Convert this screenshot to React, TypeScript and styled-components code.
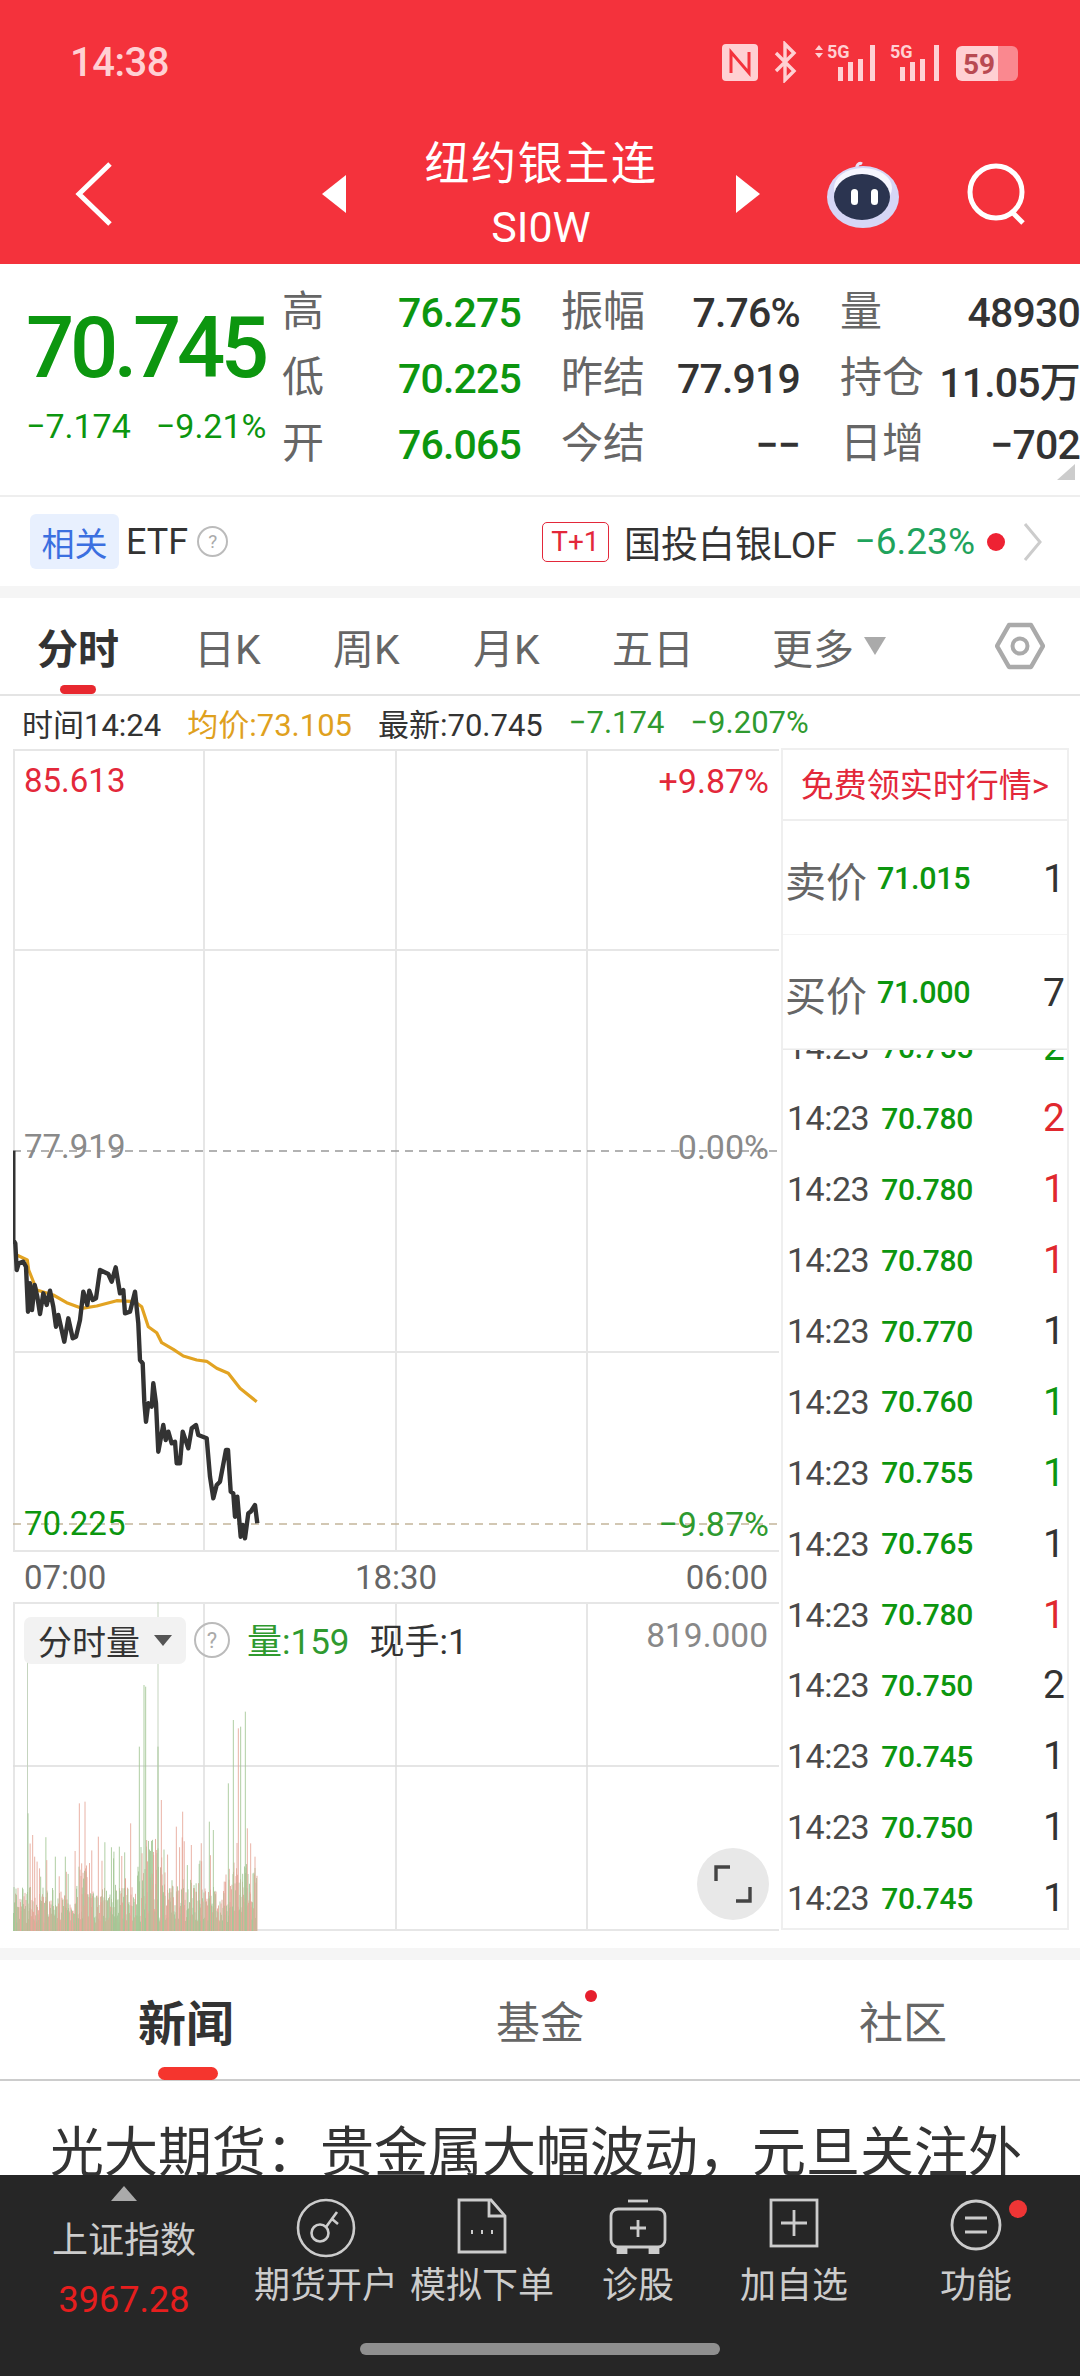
import React from "react";
import styled, { createGlobalStyle } from "styled-components";

const GREEN = "#0c960f";
const SOFT_GREEN = "#2f9a2f";
const RED = "#e3283a";
const GRID = "#e6e6e6";

const GlobalStyle = createGlobalStyle`
  html, body {
    margin: 0;
    padding: 0;
    background: #fff;
    font-family: Roboto, "Noto Sans CJK SC", sans-serif;
  }
  * { box-sizing: border-box; }
`;

const Page = styled.div`
  position: relative;
  width: 1080px;
  height: 2376px;
  overflow: hidden;
  background: #fff;
  display: flex;
  flex-direction: column;
`;

/* header */
const Header = styled.header`
  height: 264px;
  background: #f4323c;
  color: #fff;
`;

const StatusBar = styled.div`
  height: 124px;
  padding: 0 58px 0 70px;
  display: flex;
  align-items: center;
  justify-content: space-between;
`;

const Clock = styled.span`
  font-size: 40px;
  font-weight: 500;
  color: #ffd0d3;
  letter-spacing: -0.5px;
`;

const NavRow = styled.div`
  height: 140px;
  display: grid;
  grid-template-columns: 322px 24px 390px 24px 1fr;
  align-items: center;
`;

const BackCell = styled.div`
  padding-left: 75px;
  display: flex;
  align-items: center;
`;

const TitleBlock = styled.div`
  display: flex;
  flex-direction: column;
  align-items: center;
`;

const Title = styled.div`
  font-size: 45px;
  line-height: 58px;
  letter-spacing: 1.6px;
`;

const SubTitle = styled.div`
  font-size: 43px;
  line-height: 50px;
  margin-top: 8px;
`;

const NavRight = styled.div`
  padding-left: 67px;
  display: flex;
  align-items: center;
  gap: 68px;
`;

/* quote */
const QuoteSection = styled.section`
  height: 231px;
  display: flex;
  overflow: hidden;
  position: relative;
`;

const PriceBlock = styled.div`
  width: 282px;
  padding: 42px 0 0 26px;
  flex-shrink: 0;
`;

const BigPrice = styled.div`
  font-size: 85px;
  line-height: 84px;
  font-weight: 500;
  color: ${GREEN};
  letter-spacing: -4.4px;
`;

const ChangeRow = styled.div`
  display: flex;
  gap: 25px;
  margin-top: 16px;
  font-size: 34px;
  line-height: 40px;
  color: ${GREEN};
  white-space: nowrap;
`;

const StatGrid = styled.div`
  display: grid;
  grid-template-columns: 239px 239px 240px;
  grid-auto-rows: 66px;
  column-gap: 40px;
  padding-top: 16px;
`;

const Stat = styled.div`
  display: flex;
  align-items: center;
  justify-content: space-between;
  white-space: nowrap;
`;

const StatLabel = styled.span`
  font-size: 42px;
  line-height: 56px;
  padding-bottom: 2px;
  color: #666;
`;

const StatValue = styled.span<{ $green?: boolean }>`
  font-size: 41px;
  font-weight: 500;
  letter-spacing: -0.8px;
  color: ${({ $green }) => ($green ? GREEN : "#333")};
`;

const CornerMark = styled.div`
  position: absolute;
  right: 5px;
  bottom: 15px;
  width: 0;
  height: 0;
  border-left: 18px solid transparent;
  border-bottom: 16px solid #ccc;
`;

const RelatedRow = styled.div`
  height: 91px;
  border-top: 2px solid #eee;
  padding: 0 38px 0 30px;
  display: flex;
  align-items: center;
`;

const RelatedChip = styled.span`
  width: 89px;
  height: 55px;
  background: #e8f0fe;
  border-radius: 6px;
  color: #3b6fe0;
  font-size: 33px;
  display: flex;
  align-items: center;
  justify-content: center;
`;

const EtfLabel = styled.span`
  font-size: 36px;
  color: #333;
  margin-left: 7px;
`;

const Hint = styled.span<{ $size: number }>`
  width: ${({ $size }) => $size}px;
  height: ${({ $size }) => $size}px;
  border: 2px solid #bbb;
  border-radius: 50%;
  color: #aaa;
  font-size: ${({ $size }) => Math.round($size * 0.62)}px;
  display: inline-flex;
  align-items: center;
  justify-content: center;
  flex-shrink: 0;
`;

const EtfHint = styled(Hint)`
  margin-left: 9px;
`;

const TradeTag = styled.span`
  margin-left: auto;
  width: 67px;
  height: 40px;
  border: 1px solid ${RED};
  border-radius: 5px;
  color: ${RED};
  font-size: 28px;
  display: flex;
  align-items: center;
  justify-content: center;
`;

const FundName = styled.span`
  font-size: 37px;
  color: #333;
  margin-left: 15px;
`;

const FundChange = styled.span`
  font-size: 37px;
  color: #1fa35c;
  margin-left: 18px;
`;

const RedDot = styled.span`
  width: 18px;
  height: 18px;
  border-radius: 50%;
  background: #ee2233;
  margin: 0 18px 0 12px;
`;

const Divider = styled.div<{ $h: number }>`
  height: ${({ $h }) => $h}px;
  flex-shrink: 0;
  background: #f5f5f5;
`;

/* period tabs */
const PeriodTabs = styled.nav`
  height: 98px;
  padding-left: 37px;
  border-bottom: 2px solid #e4e4e4;
  display: grid;
  grid-template-columns: 157px 139px 140px 139px 160px 223px 1fr;
  align-items: center;
`;

const PeriodTab = styled.div<{ $active?: boolean }>`
  position: relative;
  height: 100%;
  display: flex;
  align-items: center;
  font-size: 41px;
  color: ${({ $active }) => ($active ? "#333" : "#666")};
  font-weight: ${({ $active }) => ($active ? 700 : 400)};
`;

const TabMark = styled.span`
  position: absolute;
  left: 23px;
  bottom: 0;
  width: 36px;
  height: 9px;
  border-radius: 5px;
  background: #e8282f;
`;

const MoreCaret = styled.span`
  width: 0;
  height: 0;
  margin-left: 10px;
  border-left: 11px solid transparent;
  border-right: 11px solid transparent;
  border-top: 18px solid #aaa;
`;

const InfoRow = styled.div`
  height: 53px;
  padding-left: 22px;
  display: flex;
  align-items: center;
  gap: 26px;
  font-size: 31px;
  white-space: nowrap;
`;

const InfoItem = styled.span<{ $color: string }>`
  color: ${({ $color }) => $color};
`;

/* charts */
const ChartRow = styled.div`
  height: 1199px;
  padding-left: 13px;
  display: flex;
  align-items: flex-start;
  gap: 2px;
`;

const ChartColumn = styled.div`
  width: 766px;
  flex-shrink: 0;
`;

const Plot = styled.div<{ $h: number }>`
  position: relative;
  height: ${({ $h }) => $h}px;

  & > svg {
    display: block;
  }
`;

const PlotLabel = styled.span<{ $top: number; $color: string; $right?: boolean }>`
  position: absolute;
  top: ${({ $top }) => $top}px;
  ${({ $right }) => ($right ? "right: 10px; font-size: 34px;" : "left: 11px; font-size: 33px;")}
  line-height: 40px;
  color: ${({ $color }) => $color};
`;

const TimeAxis = styled.div`
  height: 50px;
  padding: 0 11px;
  display: flex;
  align-items: center;
  justify-content: space-between;
  font-size: 33px;
  color: #666;
`;

const VolumeBar = styled.div`
  position: absolute;
  top: 11px;
  left: 11px;
  right: 11px;
  display: flex;
  align-items: center;
`;

const VolumeChip = styled.span`
  width: 162px;
  height: 47px;
  padding-left: 14px;
  background: #f2f2f2;
  border-radius: 7px;
  font-size: 34px;
  color: #333;
  display: flex;
  align-items: center;
`;

const ChipCaret = styled.span`
  width: 0;
  height: 0;
  margin-left: 14px;
  border-left: 9px solid transparent;
  border-right: 9px solid transparent;
  border-top: 11px solid #555;
`;

const VolumeHint = styled(Hint)`
  margin-left: 8px;
`;

const VolumeValue = styled.span<{ $color: string; $gap: number }>`
  font-size: 35px;
  margin-bottom: 3px;
  color: ${({ $color }) => $color};
  margin-left: ${({ $gap }) => $gap}px;
`;

const VolumeMax = styled.span`
  margin-left: auto;
  margin-bottom: 9px;
  font-size: 33.5px;
  color: #888;
`;

const ExpandButton = styled.div`
  position: absolute;
  right: 10px;
  bottom: 11px;
  width: 72px;
  height: 72px;
  border-radius: 50%;
  background: #e8e8e8;
  display: flex;
  align-items: center;
  justify-content: center;
`;

const SidePanel = styled.aside`
  width: 288px;
  height: 1182px;
  margin-top: -1px;
  border: 2px solid #efefef;
  overflow: hidden;
  position: relative;
`;

const DepthBox = styled.div`
  position: relative;
  z-index: 1;
  height: 300px;
  background: #fff;
  border-bottom: 1px solid #eaeaea;
`;

const PromoLink = styled.div`
  height: 71px;
  padding-bottom: 4px;
  border-bottom: 2px solid #eee;
  color: ${RED};
  font-size: 33px;
  display: flex;
  align-items: center;
  justify-content: center;
  white-space: nowrap;
`;

const DepthRow = styled.div`
  height: 114px;
  padding: 2px 2px 0 2px;
  display: flex;
  align-items: center;
  border-bottom: 1px solid #f4f4f4;
`;

const DepthLabel = styled.span`
  font-size: 41px;
  color: #666;
`;

const RowPrice = styled.span`
  font-size: 30.5px;
  font-weight: 500;
  color: ${GREEN};
  margin-left: 10px;
  letter-spacing: -0.3px;
`;

const RowQty = styled.span<{ $color?: string }>`
  margin-left: auto;
  font-size: 39px;
  color: ${({ $color }) => $color ?? "#333"};
`;

const TickList = styled.div`
  margin-top: -38px;
`;

const TickRow = styled.div`
  height: 70.9px;
  padding: 0 2px 0 4px;
  display: flex;
  align-items: center;
`;

const TickTime = styled.span`
  font-size: 34px;
  letter-spacing: -0.5px;
  color: #4a4a4a;
`;

const TickPrice = styled(RowPrice)`
  font-size: 30px;
  margin-left: 12px;
`;

/* news */
const NewsTabs = styled.nav`
  height: 121px;
  flex-shrink: 0;
  border-bottom: 2px solid #ccc;
  display: grid;
  grid-template-columns: 372px 336px 372px;
  align-items: center;
`;

const NewsTab = styled.div<{ $active?: boolean; $shift?: number }>`
  position: relative;
  height: 100%;
  padding-left: ${({ $shift }) => $shift ?? 0}px;
  display: flex;
  align-items: center;
  justify-content: center;
  font-size: ${({ $active }) => ($active ? 48 : 44)}px;
  font-weight: ${({ $active }) => ($active ? 700 : 400)};
  color: ${({ $active }) => ($active ? "#333" : "#666")};
`;

const NewsMark = styled.span`
  position: absolute;
  left: 158px;
  bottom: -1px;
  width: 60px;
  height: 13px;
  border-radius: 7px;
  background: #f5352e;
`;

const NewsDot = styled.span`
  position: absolute;
  left: 213px;
  top: 30px;
  width: 12px;
  height: 12px;
  border-radius: 50%;
  background: #e61f2d;
`;

const NewsBody = styled.div`
  flex: 1;
  min-height: 0;
  overflow: hidden;
  padding: 35px 0 0 50px;
  font-size: 54px;
  line-height: 76px;
  color: #333;
  white-space: nowrap;
`;

/* bottom bar */
const BottomBar = styled.footer`
  position: relative;
  height: 201px;
  flex-shrink: 0;
  background: #262626;
  display: grid;
  grid-template-columns: 248px 156px 156px 156px 156px 1fr;
  color: #ccc;
`;

const IndexCell = styled.div`
  padding-top: 11px;
  display: flex;
  flex-direction: column;
  align-items: center;
`;

const IndexCaret = styled.span`
  width: 0;
  height: 0;
  border-left: 13px solid transparent;
  border-right: 13px solid transparent;
  border-bottom: 15px solid #aaa;
`;

const IndexName = styled.span`
  margin-top: 18px;
  font-size: 36px;
  line-height: 44px;
`;

const IndexValue = styled.span`
  margin-top: 17px;
  font-size: 36px;
  line-height: 40px;
  color: #e61e1e;
`;

const ActionItem = styled.div`
  position: relative;
  padding-top: 23px;
  display: flex;
  flex-direction: column;
  align-items: center;
`;

const ActionIcon = styled.div`
  height: 60px;
  display: flex;
  align-items: flex-start;
  justify-content: center;
`;

const ActionLabel = styled.span`
  margin-top: 6px;
  font-size: 36px;
  line-height: 44px;
  white-space: nowrap;
`;

const ActionDot = styled.span`
  position: absolute;
  top: 25px;
  left: 137px;
  width: 18px;
  height: 18px;
  border-radius: 50%;
  background: #ee3535;
`;

const HomeIndicator = styled.div`
  position: absolute;
  left: 360px;
  top: 168px;
  width: 360px;
  height: 12px;
  border-radius: 6px;
  background: #8f8f8f;
`;

/* data */
const stats = [
  ["高", "76.275", true],
  ["振幅", "7.76%", false],
  ["量", "48930", false],
  ["低", "70.225", true],
  ["昨结", "77.919", false],
  ["持仓", "11.05万", false],
  ["开", "76.065", true],
  ["今结", "−−", false],
  ["日增", "−702", false],
] as const;

const ticks: [string, string, string?][] = [
  ["14:23", "70.755", GREEN],
  ["14:23", "70.780", "#e0282e"],
  ["14:23", "70.780", "#e0282e"],
  ["14:23", "70.780", "#e0282e"],
  ["14:23", "70.770"],
  ["14:23", "70.760", GREEN],
  ["14:23", "70.755", GREEN],
  ["14:23", "70.765"],
  ["14:23", "70.780", "#e0282e"],
  ["14:23", "70.750"],
  ["14:23", "70.745"],
  ["14:23", "70.750"],
  ["14:23", "70.745"],
];
const tickQty = ["2", "2", "1", "1", "1", "1", "1", "1", "1", "2", "1", "1", "1"];

// traced from the chart, in zoomed px: page x = px / 3, page y = 1120 + py / 3
const pricePts = [
  [40, 92], [40, 360], [46, 370], [50, 450], [56, 430], [70, 425], [78, 440], [84, 575], [90, 490], [96, 570],
  [104, 495], [112, 530], [120, 582], [130, 520], [140, 555], [150, 512], [160, 560], [168, 620], [175, 585],
  [193, 665], [205, 595], [218, 655], [228, 650], [240, 600], [250, 515], [262, 555], [268, 512], [278, 540],
  [288, 535], [300, 450], [325, 462], [335, 485], [347, 442], [360, 520], [370, 510], [375, 580], [390, 575],
  [405, 515], [415, 610], [420, 720], [428, 730], [433, 845], [438, 905], [445, 850], [455, 860], [460, 790],
  [468, 850], [475, 995], [490, 915], [497, 960], [505, 935], [515, 970], [525, 965], [530, 1030], [540, 1030],
  [548, 935], [565, 985], [575, 925], [588, 915], [595, 945], [620, 955], [630, 1070], [640, 1135], [650, 1095],
  [660, 1085], [678, 990], [684, 990], [692, 1115], [700, 1120], [705, 1190], [712, 1130], [722, 1250],
  [728, 1215], [735, 1255], [745, 1180], [752, 1175], [765, 1155], [772, 1210],
];

const avgPts = [
  [50, 405], [82, 420], [86, 450], [110, 510], [160, 525], [200, 548], [245, 565], [290, 558], [350, 542],
  [405, 545], [425, 560], [445, 620], [470, 638], [485, 668], [520, 688], [550, 708], [590, 720], [620, 724],
  [650, 745], [685, 760], [720, 805], [770, 845],
];

const toPath = (pts: number[][]) =>
  pts.map(([x, y], i) => `${i ? "L" : "M"}${(x / 3).toFixed(1)} ${(1120 + y / 3).toFixed(1)}`).join(" ");

// [px in zoom, top in zoom, green?] page x = px / 3, page y = 1590 + top / 3
const peaks: [number, number, boolean][] = [
  [84, 670, true], [98, 735, false], [104, 800, false], [122, 860, true], [166, 800, true], [196, 800, true],
  [238, 640, false], [255, 635, false], [245, 820, false], [295, 740, false], [358, 770, true], [392, 700, false],
  [418, 470, true], [432, 285, true], [437, 290, true], [440, 750, false], [474, 470, true], [484, 630, false],
  [529, 710, false], [548, 665, false], [574, 765, false], [628, 695, true], [640, 720, true], [685, 580, true],
  [700, 390, true], [715, 415, false], [722, 410, true], [736, 365, true], [742, 715, false], [752, 760, false],
  [765, 800, false],
];

const seeded = (seed: number) => () => {
  seed = (seed * 16807) % 2147483647;
  return seed / 2147483647;
};

const buildBars = () => {
  const rnd = seeded(4242);
  const list: { x: number; top: number; green: boolean }[] = [];
  for (let x = 13; x <= 257; x += 0.5) {
    const dense = x > 136 && x < 165 ? 85 : x > 78 && x < 90 ? 62 : x > 225 ? 62 : x > 170 && x < 200 ? 45 : 36;
    list.push({ x, top: 1931 - (8 + rnd() * dense), green: x > 136 && x < 150 ? rnd() > 0.25 : rnd() > 0.5 });
  }
  for (let i = 0; i < 45; i += 1) {
    list.push({ x: 14 + rnd() * 242, top: 1931 - (40 + rnd() * 55), green: rnd() > 0.5 });
  }
  peaks.forEach(([px, top, green]) => list.push({ x: px / 3, top: 1590 + top / 3, green }));
  return list;
};

const bars = buildBars();

/* drawings */
const StatusIcons = () => (
  <svg width="300" height="42" viewBox="0 0 300 42">
    <rect x="0" y="3" width="36" height="37" rx="4" fill="#ffd0d3" />
    <path d="M9 32V11l18 21V11" fill="none" stroke="#f4323c" strokeWidth="3" />
    <path d="M54 12l18 18-9 9V3l9 9-18 18" fill="none" stroke="#ffd0d3" strokeWidth="3.4" />
    <path d="M93 9l4-5 4 5zM93 12l4 5 4-5z" fill="#ffd0d3" />
    <text x="105" y="17" fontSize="18" fontWeight="700" fill="#ffd0d3" fontFamily="Roboto">5G</text>
    <g fill="#ffd0d3">
      <rect x="116" y="26" width="5" height="14" />
      <rect x="126" y="21" width="5" height="19" />
      <rect x="136" y="18" width="5" height="22" />
      <rect x="148" y="4" width="5" height="36" />
    </g>
    <text x="168" y="17" fontSize="18" fontWeight="700" fill="#ffd0d3" fontFamily="Roboto">5G</text>
    <g fill="#ffd0d3">
      <rect x="178" y="26" width="5" height="14" />
      <rect x="188" y="21" width="5" height="19" />
      <rect x="198" y="18" width="5" height="22" />
      <rect x="212" y="4" width="5" height="36" />
    </g>
    <path d="M240 5h36v35h-36a6 6 0 0 1-6-6V11a6 6 0 0 1 6-6z" fill="#ffd0d3" />
    <path d="M276 5h14a6 6 0 0 1 6 6v23a6 6 0 0 1-6 6h-14z" fill="#ffd0d3" opacity="0.55" />
    <text x="241" y="33" fontSize="28" fontWeight="700" fill="#b94a52" fontFamily="Roboto">59</text>
  </svg>
);

const RobotIcon = () => (
  <svg width="72" height="68" viewBox="0 0 72 68">
    <path d="M31 10c-3-4 1-8 4-6" fill="none" stroke="#e8e4f8" strokeWidth="3" />
    <circle cx="36" cy="10" r="3" fill="#f2f0ff" />
    <ellipse cx="36" cy="37" rx="36" ry="31" fill="#d6d6f6" />
    <ellipse cx="36" cy="28" rx="29" ry="20" fill="#f6f6ff" />
    <ellipse cx="35" cy="37" rx="28" ry="23" fill="#2b3450" />
    <rect x="24" y="29" width="7" height="16" rx="3.5" fill="#fff" />
    <rect x="44" y="29" width="7" height="16" rx="3.5" fill="#fff" />
  </svg>
);

const KeyIcon = () => (
  <svg width="60" height="60" viewBox="0 0 60 60" fill="none" stroke="#ccc" strokeWidth="2.6">
    <circle cx="30" cy="30" r="28" />
    <circle cx="24" cy="35" r="8.5" />
    <path d="M30 29l11-15M36 21l6 5" />
  </svg>
);

const DocIcon = () => (
  <svg width="50" height="56" viewBox="0 0 50 56" fill="none" stroke="#ccc" strokeWidth="2.8">
    <path d="M2 2h32l14 16v36H2z" />
    <path d="M32 2v16h16" />
    <path d="M14 34h2M24 34h2M34 34h2" strokeWidth="4" />
  </svg>
);

const CaseIcon = () => (
  <svg width="58" height="56" viewBox="0 0 58 56" fill="none" stroke="#ccc" strokeWidth="2.8">
    <path d="M19 3h20" />
    <rect x="2" y="11" width="54" height="38" rx="7" />
    <path d="M29 22v17M21 30h16" />
    <path d="M9 50v5h8v-5M41 50v5h8v-5" fill="#ccc" />
  </svg>
);

const PlusSquareIcon = () => (
  <svg width="50" height="50" viewBox="0 0 50 50" fill="none" stroke="#ccc" strokeWidth="2.8">
    <rect x="2" y="2" width="46" height="46" />
    <path d="M25 12v26M12 25h26" />
  </svg>
);

const MenuIcon = () => (
  <svg width="52" height="54" viewBox="0 0 52 54" fill="none" stroke="#ccc" strokeWidth="2.8">
    <circle cx="26" cy="27" r="24" />
    <path d="M15 20h22M15 34h22" />
  </svg>
);

const PriceChart = () => (
  <svg width="766" height="803" viewBox="13 749 766 803">
    <g stroke={GRID} strokeWidth="2" fill="none">
      <path d="M13 750H779M13 950H779M13 1352H779M13 1551H779" />
      <path d="M14 749V1552M204 749V1552M396 749V1552M587 749V1552" />
    </g>
    <path d="M13 1151H779" stroke="#999" strokeWidth="1.6" strokeDasharray="8 6" />
    <path d="M13 1524H779" stroke="#c4b59a" strokeWidth="1.6" strokeDasharray="8 6" />
    <path d={toPath(avgPts)} fill="none" stroke="#e2a322" strokeWidth="3.2" strokeLinejoin="round" />
    <path d={toPath(pricePts)} fill="none" stroke="#333" strokeWidth="4.4" strokeLinejoin="round" />
  </svg>
);

const VolumeChart = () => (
  <svg width="766" height="329" viewBox="13 1602 766 329">
    <g stroke={GRID} strokeWidth="2" fill="none">
      <path d="M13 1603H779M13 1930H779" />
      <path d="M14 1602V1931M204 1602V1931M396 1602V1931M587 1602V1931" />
    </g>
    <path d="M13 1766H779" stroke="#dcdcdc" strokeWidth="1.4" />
    <path d="M27.5 1660V1931M158 1602V1931" stroke="#c5d4bf" strokeWidth="1" />
    {bars.map((b, i) => (
      <line
        key={i}
        x1={b.x}
        x2={b.x}
        y1={b.top}
        y2={1931}
        stroke={b.green ? "#a3c795" : "#e6a698"}
        strokeWidth="1"
        opacity="0.85"
      />
    ))}
  </svg>
);

export default function App() {
  return (
    <Page>
      <GlobalStyle />
      <Header>
        <StatusBar>
          <Clock>14:38</Clock>
          <StatusIcons />
        </StatusBar>
        <NavRow>
          <BackCell>
            <svg width="37" height="64" viewBox="0 0 37 64" fill="none" stroke="#fff" strokeWidth="5">
              <path d="M35 2L4 32l31 30" />
            </svg>
          </BackCell>
          <svg width="24" height="38" viewBox="0 0 24 38">
            <path d="M24 0v38L0 19z" fill="#fff" />
          </svg>
          <TitleBlock>
            <Title>纽约银主连</Title>
            <SubTitle>SI0W</SubTitle>
          </TitleBlock>
          <svg width="24" height="38" viewBox="0 0 24 38">
            <path d="M0 0v38l24-19z" fill="#fff" />
          </svg>
          <NavRight>
            <RobotIcon />
            <svg width="62" height="62" viewBox="0 0 62 62" fill="none" stroke="#fff" strokeWidth="5">
              <circle cx="29" cy="29" r="26" />
              <path d="M44 48l12 12" />
            </svg>
          </NavRight>
        </NavRow>
      </Header>

      <QuoteSection>
        <PriceBlock>
          <BigPrice>70.745</BigPrice>
          <ChangeRow>
            <span>−7.174</span>
            <span>−9.21%</span>
          </ChangeRow>
        </PriceBlock>
        <StatGrid>
          {stats.map(([label, value, green]) => (
            <Stat key={label}>
              <StatLabel>{label}</StatLabel>
              <StatValue $green={green}>{value}</StatValue>
            </Stat>
          ))}
        </StatGrid>
        <CornerMark />
      </QuoteSection>

      <RelatedRow>
        <RelatedChip>相关</RelatedChip>
        <EtfLabel>ETF</EtfLabel>
        <EtfHint $size={31}>?</EtfHint>
        <TradeTag>T+1</TradeTag>
        <FundName>国投白银LOF</FundName>
        <FundChange>−6.23%</FundChange>
        <RedDot />
        <svg width="19" height="40" viewBox="0 0 19 40" fill="none" stroke="#ccc" strokeWidth="3">
          <path d="M2 2l15 18L2 38" />
        </svg>
      </RelatedRow>
      <Divider $h={12} />

      <PeriodTabs>
        <PeriodTab $active>
          分时
          <TabMark />
        </PeriodTab>
        <PeriodTab>日K</PeriodTab>
        <PeriodTab>周K</PeriodTab>
        <PeriodTab>月K</PeriodTab>
        <PeriodTab>五日</PeriodTab>
        <PeriodTab>
          更多
          <MoreCaret />
        </PeriodTab>
        <svg width="50" height="48" viewBox="0 0 50 48" fill="none" stroke="#aaa" strokeWidth="4.5">
          <path d="M14 3h22l12 21-12 21H14L2 24z" strokeLinejoin="round" />
          <circle cx="25" cy="24" r="7.5" strokeWidth="4" />
        </svg>
      </PeriodTabs>

      <InfoRow>
        <InfoItem $color="#333">时间14:24</InfoItem>
        <InfoItem $color="#dfa11e">均价:73.105</InfoItem>
        <InfoItem $color="#333">最新:70.745</InfoItem>
        <InfoItem $color={SOFT_GREEN}>−7.174</InfoItem>
        <InfoItem $color={SOFT_GREEN}>−9.207%</InfoItem>
      </InfoRow>

      <ChartRow>
        <ChartColumn>
          <Plot $h={803}>
            <PriceChart />
            <PlotLabel $top={12} $color={RED}>85.613</PlotLabel>
            <PlotLabel $top={12} $color={RED} $right>+9.87%</PlotLabel>
            <PlotLabel $top={378} $color="#8a8a8a">77.919</PlotLabel>
            <PlotLabel $top={378} $color="#8a8a8a" $right>0.00%</PlotLabel>
            <PlotLabel $top={755} $color={GREEN}>70.225</PlotLabel>
            <PlotLabel $top={755} $color={SOFT_GREEN} $right>−9.87%</PlotLabel>
          </Plot>
          <TimeAxis>
            <span>07:00</span>
            <span>18:30</span>
            <span>06:00</span>
          </TimeAxis>
          <Plot $h={329}>
            <VolumeChart />
            <VolumeBar>
              <VolumeChip>
                分时量
                <ChipCaret />
              </VolumeChip>
              <VolumeHint $size={36}>?</VolumeHint>
              <VolumeValue $color={SOFT_GREEN} $gap={17}>量:159</VolumeValue>
              <VolumeValue $color="#333" $gap={20}>现手:1</VolumeValue>
              <VolumeMax>819.000</VolumeMax>
            </VolumeBar>
            <ExpandButton>
              <svg width="38" height="38" viewBox="0 0 38 38" fill="none" stroke="#444" strokeWidth="3.4">
                <path d="M2 16V2h14M36 22v14H22" />
              </svg>
            </ExpandButton>
          </Plot>
        </ChartColumn>

        <SidePanel>
          <DepthBox>
            <PromoLink>免费领实时行情&gt;</PromoLink>
            <DepthRow>
              <DepthLabel>卖价</DepthLabel>
              <RowPrice>71.015</RowPrice>
              <RowQty>1</RowQty>
            </DepthRow>
            <DepthRow>
              <DepthLabel>买价</DepthLabel>
              <RowPrice>71.000</RowPrice>
              <RowQty>7</RowQty>
            </DepthRow>
          </DepthBox>
          <TickList>
            {ticks.map(([time, price, color], i) => (
              <TickRow key={i}>
                <TickTime>{time}</TickTime>
                <TickPrice>{price}</TickPrice>
                <RowQty $color={color}>{tickQty[i]}</RowQty>
              </TickRow>
            ))}
          </TickList>
        </SidePanel>
      </ChartRow>
      <Divider $h={12} />

      <NewsTabs>
        <NewsTab $active>
          新闻
          <NewsMark />
        </NewsTab>
        <NewsTab>
          基金
          <NewsDot />
        </NewsTab>
        <NewsTab $shift={18}>社区</NewsTab>
      </NewsTabs>
      <NewsBody>光大期货：贵金属大幅波动，元旦关注外</NewsBody>

      <BottomBar>
        <IndexCell>
          <IndexCaret />
          <IndexName>上证指数</IndexName>
          <IndexValue>3967.28</IndexValue>
        </IndexCell>
        <ActionItem>
          <ActionIcon><KeyIcon /></ActionIcon>
          <ActionLabel>期货开户</ActionLabel>
        </ActionItem>
        <ActionItem>
          <ActionIcon><DocIcon /></ActionIcon>
          <ActionLabel>模拟下单</ActionLabel>
        </ActionItem>
        <ActionItem>
          <ActionIcon><CaseIcon /></ActionIcon>
          <ActionLabel>诊股</ActionLabel>
        </ActionItem>
        <ActionItem>
          <ActionIcon><PlusSquareIcon /></ActionIcon>
          <ActionLabel>加自选</ActionLabel>
        </ActionItem>
        <ActionItem>
          <ActionIcon><MenuIcon /></ActionIcon>
          <ActionLabel>功能</ActionLabel>
          <ActionDot />
        </ActionItem>
        <HomeIndicator />
      </BottomBar>
    </Page>
  );
}
